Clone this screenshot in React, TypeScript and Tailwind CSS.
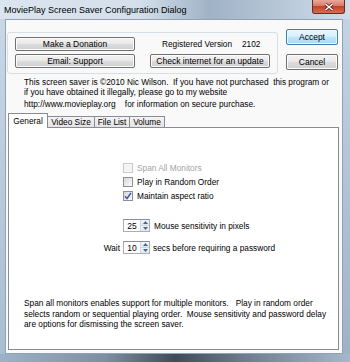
const Btn = ({ label, w = "w-[120px]", h = "h-[14px]", primary = false }: { label: string; w?: string; h?: string; primary?: boolean }) => (
  <div
    className={`${w} ${h} flex items-center justify-center rounded-[2px] border text-[8.5px] leading-none text-black ${
      primary
        ? "border-[#3c7fb1] bg-[linear-gradient(#eaf6fd_0%,#d9f0fc_45%,#bee6fd_50%,#a7d9f5_100%)] shadow-[inset_0_0_0_1px_#e8f6fd]"
        : "border-[#707070] bg-[linear-gradient(#f2f2f2_0%,#ebebeb_45%,#dddddd_50%,#cfcfcf_100%)] shadow-[inset_0_0_0_1px_#fcfcfc]"
    }`}
  >
    {label}
  </div>
);

const Check = ({ label, checked = false, disabled = false }: { label: string; checked?: boolean; disabled?: boolean }) => (
  <div className="flex h-[14px] items-center">
    <div
      className={`flex h-[10px] w-[10px] items-center justify-center border ${
        disabled ? "border-[#c9c9c9] bg-[#f4f4f4]" : "border-[#8e8f8f] bg-[linear-gradient(135deg,#d6d6d6,#fdfdfd)]"
      }`}
    >
      {checked && (
        <svg width="8" height="8" viewBox="0 0 8 8">
          <path d="M1 4.2 L3 6.5 L7 1" fill="none" stroke="#3d5da8" strokeWidth="1.5" />
        </svg>
      )}
    </div>
    <span className={`ml-[4px] ${disabled ? "text-[#a3a3a3]" : "text-black"}`}>{label}</span>
  </div>
);

const Spin = ({ value }: { value: string }) => (
  <div className="flex h-[13px] w-[27px] border border-[#abadb3] border-t-[#8a8d94] bg-white">
    <div className="flex flex-1 items-center justify-center text-[8.5px]">{value}</div>
    <div className="flex w-[9px] flex-col border-l border-[#cfd6de]">
      <div className="flex flex-1 items-center justify-center border-b border-[#cfd6de] bg-[linear-gradient(#f2f6fa,#dde8f3)]">
        <svg width="5" height="3" viewBox="0 0 5 3">
          <path d="M0 3 L2.5 0 L5 3Z" fill="#50618a" />
        </svg>
      </div>
      <div className="flex flex-1 items-center justify-center bg-[linear-gradient(#f2f6fa,#dde8f3)]">
        <svg width="5" height="3" viewBox="0 0 5 3">
          <path d="M0 0 L2.5 3 L5 0Z" fill="#50618a" />
        </svg>
      </div>
    </div>
  </div>
);

export default function App() {
  return (
    <div className="flex h-[362px] w-[350px] flex-col overflow-hidden bg-[#b8cade] font-['Liberation_Sans',Arial,sans-serif] text-[8.3px] leading-[10px] text-black">
      {/* title bar */}
      <div className="relative flex h-[19px] items-center bg-[linear-gradient(90deg,#dbe5ef_0%,#d3dfeb_40%,#9fb2c6_60%,#b7c7d8_80%,#cfdcea_100%)] pl-[4px]">
        <span className="text-[9px] text-black">MoviePlay Screen Saver Configuration Dialog</span>
        <div className="absolute right-[5px] top-0 flex h-[14px] w-[33px] items-center justify-center rounded-b-[3px] border border-t-0 border-[#6b2b22] bg-[linear-gradient(#eaa99a_0%,#d87c66_45%,#c4432a_50%,#d5704f_100%)]">
          <svg width="10" height="8" viewBox="0 0 10 8">
            <path d="M1.5 1 L8.5 7 M8.5 1 L1.5 7" stroke="#5a1f16" strokeWidth="3" />
            <path d="M1.5 1 L8.5 7 M8.5 1 L1.5 7" stroke="#ffffff" strokeWidth="1.6" />
          </svg>
        </div>
      </div>

      <div className="flex flex-1">
        <div className="w-[5px] bg-[linear-gradient(#c9d7e5,#aabdd1)]" />
        {/* client */}
        <div className="flex flex-1 flex-col border border-[#8ea3b9] bg-[#f9f9f9]">
          <div className="flex">
            <div className="ml-[1px] mt-[12px] flex h-[42px] w-[271px] flex-col gap-[3px] rounded-[3px] border border-[#d5dfe5] px-[7px] pt-[4px]">
              <div className="flex items-center">
                <Btn label="Make a Donation" />
                <span className="ml-[27px] w-[78px]">Registered Version</span>
                <span className="ml-[2px]">2102</span>
              </div>
              <div className="flex items-center justify-between">
                <Btn label="Email:   Support" />
                <Btn label="Check internet for an update" />
              </div>
            </div>
            <div className="ml-[8px] mt-[9px] flex flex-col">
              <Btn label="Accept" w="w-[52px]" h="h-[16px]" primary />
              <div className="mt-[9px]">
                <Btn label="Cancel" w="w-[52px]" h="h-[16px]" />
              </div>
            </div>
          </div>

          <div className="ml-[18px] mt-[3px]">
            <div>This screen saver is ©2010 Nic Wilson.&nbsp; If you have not purchased&nbsp; this program or</div>
            <div>if you have obtained it illegally, please go to my website</div>
            <div className="mt-[2px]">http://www.movieplay.org&nbsp;&nbsp;&nbsp; for information on secure purchase.</div>
          </div>

          {/* tabs */}
          <div className="ml-[2px] mt-[4px] flex items-end">
            <div className="relative z-10 -mb-px flex h-[15px] w-[40px] items-center justify-center border border-b-0 border-[#898c95] bg-white pb-[1px]">General</div>
            <div className="flex h-[11px] w-[47px] items-center justify-center border border-l-0 border-b-0 border-[#898c95] bg-[linear-gradient(#f4f4f4,#e3e3e3)]">Video Size</div>
            <div className="flex h-[11px] w-[35px] items-center justify-center border border-l-0 border-b-0 border-[#898c95] bg-[linear-gradient(#f4f4f4,#e3e3e3)]">File List</div>
            <div className="flex h-[11px] w-[35px] items-center justify-center border border-l-0 border-b-0 border-[#898c95] bg-[linear-gradient(#f4f4f4,#e3e3e3)]">Volume</div>
          </div>
          <div className="mb-[3px] ml-[2px] mr-[3px] flex flex-1 flex-col border border-[#898c95] bg-white">
            <div className="ml-[114px] mt-[33px] flex flex-col">
              <Check label="Span All Monitors" disabled />
              <Check label="Play in Random Order" />
              <Check label="Maintain aspect ratio" checked />
            </div>
            <div className="mt-[16px] flex items-center">
              <div className="w-[114px]" />
              <Spin value="25" />
              <span className="ml-[4px]">Mouse sensitivity in pixels</span>
            </div>
            <div className="mt-[9px] flex items-center">
              <div className="w-[111px] text-right">Wait</div>
              <div className="ml-[3px]">
                <Spin value="10" />
              </div>
              <span className="ml-[3px]">secs before requiring a password</span>
            </div>
            <div className="ml-[15px] mt-[44px] leading-[10.5px]">
              <div>Span all monitors enables support for multiple monitors.&nbsp;&nbsp; Play in random order</div>
              <div>selects random or sequential playing order.&nbsp; Mouse sensitivity and password delay</div>
              <div>are options for dismissing the screen saver.</div>
            </div>
          </div>
        </div>
        <div className="w-[7px] bg-[linear-gradient(#c3d3e3,#9fb3c8)]" />
      </div>
      <div className="h-[8px] bg-[linear-gradient(90deg,#9db2c8_0%,#7d8fa2_30%,#3f4b57_50%,#6d7d8e_70%,#a5b8cc_100%)]" />
    </div>
  );
}
